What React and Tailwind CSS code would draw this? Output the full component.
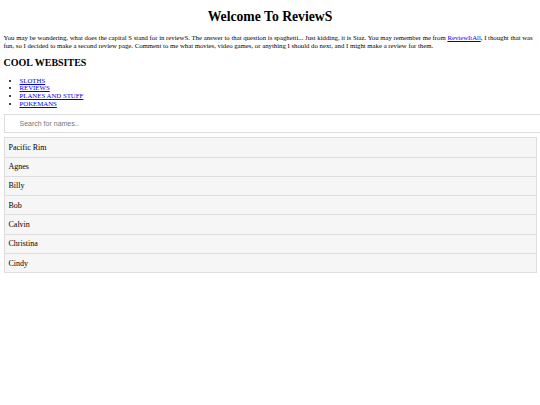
import React from "react";

const links = ["SLOTHS", "REVIEWS", "PLANES AND STUFF", "POKEMANS"];
const names = ["Pacific Rim", "Agnes", "Billy", "Bob", "Calvin", "Christina", "Cindy"];

export default function App() {
  return (
    <div className="min-h-[405px] bg-white px-[3.5px] pt-[9px] text-black [font-family:'Liberation_Serif','Times_New_Roman',serif] overflow-hidden">
      <h1 className="m-0 mb-[9px] text-center text-[13.7px] font-bold leading-[16px]">Welcome To ReviewS</h1>
      <p className="m-0 text-[6.75px] leading-[8px] whitespace-nowrap">
        You may be wondering, what does the capital S stand for in reviewS. The answer to that question is spaghetti... Just kidding, it is Staz. You may remember me from{" "}
        <a href="#" className="text-[#0000ee] underline">ReviewItAll</a>, I thought that was
        <br />
        fun, so I decided to make a second review page. Comment to me what movies, video games, or anything I should do next, and I might make a review for them.
      </p>
      <h2 className="m-0 mt-[7px] text-[10px] font-bold leading-[12px]">COOL WEBSITES</h2>
      <ul className="m-0 mt-[7.5px] list-disc pl-[16px] text-[6.8px] leading-[7.67px]">
        {links.map((l) => (
          <li key={l}>
            <a href="#" className="text-[#0000ee] underline decoration-[#0000ee]">{l}</a>
          </li>
        ))}
      </ul>
      <input
        type="text"
        placeholder="Search for names.."
        className="mt-[7px] mb-[4px] box-content block w-full border border-[#dddddd] py-[4.5px] pl-[15px] pr-[9px] text-[7px] leading-[8px] placeholder:text-[#757575] [font-family:'Liberation_Sans',Arial,sans-serif] outline-none"
      />
      <ul className="m-0 list-none p-0">
        {names.map((n, i) => (
          <li key={n} className={i === 0 ? "" : "-mt-px"}>
            <a href="#" className="block border border-[#dddddd] bg-[#f6f6f6] px-[4px] py-[4.67px] text-[8px] leading-[9px] text-black no-underline">
              {n}
            </a>
          </li>
        ))}
      </ul>
    </div>
  );
}
